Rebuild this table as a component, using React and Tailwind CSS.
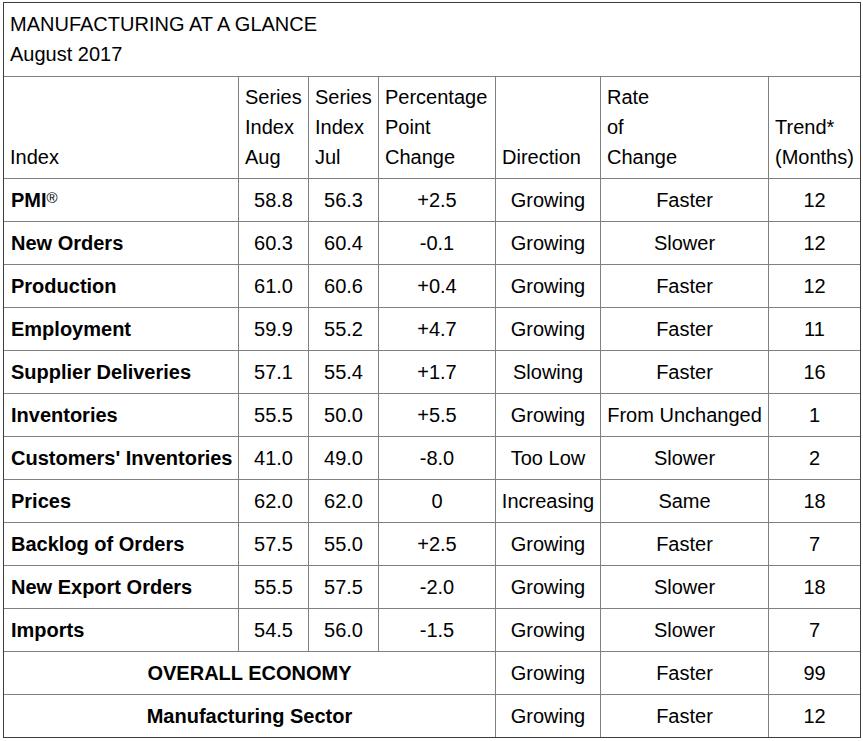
import React from "react";

const rows = [
  ["PMI", "58.8", "56.3", "+2.5", "Growing", "Faster", "12", true],
  ["New Orders", "60.3", "60.4", "-0.1", "Growing", "Slower", "12"],
  ["Production", "61.0", "60.6", "+0.4", "Growing", "Faster", "12"],
  ["Employment", "59.9", "55.2", "+4.7", "Growing", "Faster", "11"],
  ["Supplier Deliveries", "57.1", "55.4", "+1.7", "Slowing", "Faster", "16"],
  ["Inventories", "55.5", "50.0", "+5.5", "Growing", "From Unchanged", "1"],
  ["Customers' Inventories", "41.0", "49.0", "-8.0", "Too Low", "Slower", "2"],
  ["Prices", "62.0", "62.0", "0", "Increasing", "Same", "18"],
  ["Backlog of Orders", "57.5", "55.0", "+2.5", "Growing", "Faster", "7"],
  ["New Export Orders", "55.5", "57.5", "-2.0", "Growing", "Slower", "18"],
  ["Imports", "54.5", "56.0", "-1.5", "Growing", "Slower", "7"],
];

const cell = "bg-white h-[42px] flex items-center";
const center = cell + " justify-center";

function Head({ lines }) {
  return (
    <div className="bg-white h-[101px] flex flex-col justify-end px-[6px] pb-[6px]">
      {lines.map((l, i) => (
        <div key={i} className="whitespace-nowrap">{l}</div>
      ))}
    </div>
  );
}

export default function App() {
  return (
    <div
      className="bg-white w-[863px] h-[741px] pt-[2px] pl-[3px] text-black"
      style={{ fontFamily: '"Liberation Sans", Arial, sans-serif' }}
    >
      <div className="w-[858px] border border-[#3c3c3c] bg-[#808080] text-[20px] leading-[30px]">
        <div className="grid grid-cols-[234px_69px_69px_116px_104px_167px_91px] gap-px">
          <div className="col-span-7 bg-white h-[73px] px-[6px] pt-[6px]">
            <div>MANUFACTURING AT A GLANCE</div>
            <div>August 2017</div>
          </div>
          <Head lines={["Index"]} />
          <Head lines={["Series", "Index", "Aug"]} />
          <Head lines={["Series", "Index", "Jul"]} />
          <Head lines={["Percentage", "Point", "Change"]} />
          <Head lines={["Direction"]} />
          <Head lines={["Rate", "of", "Change"]} />
          <Head lines={["Trend*", "(Months)"]} />
          {rows.map((r) => (
            <React.Fragment key={r[0]}>
              <div className={cell + " px-[7px] font-bold whitespace-nowrap"}>
                {r[0]}
                {r[7] && (
                  <sup className="text-[15px] font-normal relative -top-[2px]">®</sup>
                )}
              </div>
              <div className={center}>{r[1]}</div>
              <div className={center}>{r[2]}</div>
              <div className={center}>{r[3]}</div>
              <div className={center}>{r[4]}</div>
              <div className={center}>{r[5]}</div>
              <div className={center}>{r[6]}</div>
            </React.Fragment>
          ))}
          <div className={center + " col-span-4 font-bold"}>OVERALL ECONOMY</div>
          <div className={center}>Growing</div>
          <div className={center}>Faster</div>
          <div className={center}>99</div>
          <div className={center + " col-span-4 font-bold"}>Manufacturing Sector</div>
          <div className={center}>Growing</div>
          <div className={center}>Faster</div>
          <div className={center}>12</div>
        </div>
      </div>
    </div>
  );
}
